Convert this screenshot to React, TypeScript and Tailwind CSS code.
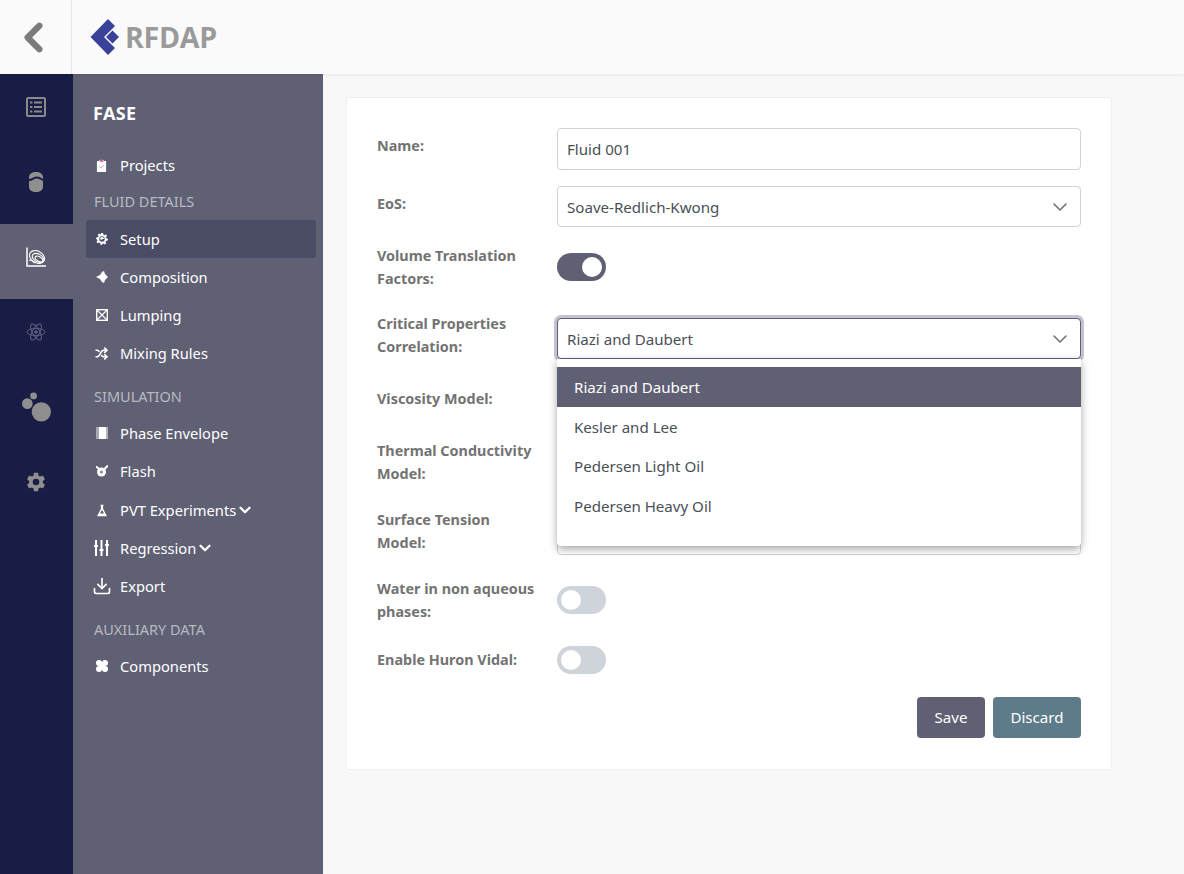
import { ChevronDown, ChevronLeft, Download, Shuffle } from "lucide-react";

const IconList = () => (
  <svg viewBox="0 0 20 20" className="w-5 h-5">
    <rect x="1" y="1" width="18" height="18" rx="1" fill="none" stroke="#8a8a8e" strokeWidth="2" />
    <path d="M4 5.5h2.4M8 5.5h8M4 10h2.4M8 10h8M4 14.5h2.4M8 14.5h8" stroke="#8a8a8e" strokeWidth="2" />
  </svg>
);

const IconTank = () => (
  <svg viewBox="0 0 14 20" className="w-[14px] h-5">
    <path d="M0 7V5C0 2 3 0 7 0s7 2 7 5v2C11 5 9 4.2 7 4.6 5 5 3 7 0 7z" fill="#8f8f8f" />
    <path d="M0 9c3 0 5-2 7-2.5 2-.4 4 .4 7 2.5v6c0 3-3 5-7 5s-7-2-7-5z" fill="#8f8f8f" />
  </svg>
);

const IconEnvelope = () => (
  <svg viewBox="0 0 20 20" className="w-5 h-5" fill="none" stroke="#fff" strokeWidth="1.1">
    <path d="M1 0.5V19H20" strokeWidth="1.5" />
    <ellipse cx="11" cy="10" rx="8" ry="5.8" transform="rotate(30 11 10)" />
    <ellipse cx="12" cy="11" rx="6.2" ry="3.9" transform="rotate(30 12 11)" />
    <ellipse cx="13" cy="12" rx="4.2" ry="2.2" transform="rotate(30 13 12)" />
    <path d="M3 13c2 0 4 1 6 3" />
  </svg>
);

const IconAtom = () => (
  <svg viewBox="0 0 20 20" className="w-5 h-5" fill="none" stroke="#5f6180" strokeWidth="1">
    <ellipse cx="10" cy="10" rx="9" ry="3.6" />
    <ellipse cx="10" cy="10" rx="9" ry="3.6" transform="rotate(60 10 10)" />
    <ellipse cx="10" cy="10" rx="9" ry="3.6" transform="rotate(120 10 10)" />
    <circle cx="10" cy="10" r="1.8" fill="#5f6180" stroke="none" />
  </svg>
);

const IconBubbles = () => (
  <svg viewBox="0 0 30 30" className="w-[29px] h-[30px]" fill="#8f8f8f">
    <circle cx="20" cy="20" r="10" />
    <circle cx="5.5" cy="11.5" r="5.5" />
    <circle cx="12" cy="3.5" r="3.5" />
  </svg>
);

const IconGear = () => (
  <svg viewBox="0 0 24 24" className="w-[22px] h-[22px]" fill="#8f8f8f">
    <path
      fillRule="evenodd"
      d="M19.4 13a7.5 7.5 0 0 0 0-2l2.1-1.6a.5.5 0 0 0 .1-.7l-2-3.4a.5.5 0 0 0-.6-.2l-2.5 1a7.3 7.3 0 0 0-1.7-1l-.4-2.7a.5.5 0 0 0-.5-.4h-3.8a.5.5 0 0 0-.5.4l-.4 2.7a7.3 7.3 0 0 0-1.7 1l-2.5-1a.5.5 0 0 0-.6.2l-2 3.4a.5.5 0 0 0 .1.7L4.6 11a7.5 7.5 0 0 0 0 2l-2.1 1.6a.5.5 0 0 0-.1.7l2 3.4c.1.2.4.3.6.2l2.5-1a7.3 7.3 0 0 0 1.7 1l.4 2.7c0 .2.3.4.5.4h3.8c.2 0 .5-.2.5-.4l.4-2.7a7.3 7.3 0 0 0 1.7-1l2.5 1c.2.1.5 0 .6-.2l2-3.4a.5.5 0 0 0-.1-.7zM12 15.6a3.6 3.6 0 1 1 0-7.2 3.6 3.6 0 0 1 0 7.2z"
    />
  </svg>
);

const SmClipboard = () => (
  <svg viewBox="0 0 12 14" className="w-[11px] h-[13px]">
    <path d="M1 2h2.5V1h5v1H11v12H1z" fill="#fff" />
    <path d="M3.5 8l2 2 3-3.5" stroke="#b9a9b8" fill="none" strokeWidth="1" />
    <rect x="4" y="0.5" width="4" height="2.5" fill="#d9668f" />
  </svg>
);

const SmCog = () => (
  <svg viewBox="0 0 12 12" className="w-3 h-3">
    <path
      fillRule="evenodd"
      fill="#fff"
      d="M5 0h2l.3 1.6 1.3.6L10 1.3 11 3l-1 1.1.3 1.2L12 6l-.4 1.6-1.5.3-.6 1.2.8 1.4-1.6 1-1.1-1-1.2.4L6 12l-1.6-.4-.3-1.5-1.2-.6-1.4.8-1-1.6 1-1.1-.4-1.2L0 6l.4-1.6 1.5-.3.6-1.2L1.7 1.5l1.6-1 1.1 1 .4-.1zM6 3.3a2.7 2.7 0 1 0 0 5.4 2.7 2.7 0 0 0 0-5.4z"
    />
    <path d="M4 6a2 2 0 0 1 4 0H6.5L6 7z" fill="#fff" />
  </svg>
);

const SmPin = () => (
  <svg viewBox="0 0 12 12" className="w-3 h-3" fill="#fff">
    <path d="M0 6l4-2 2-3 2-1 1 3 3 3-3 3-1 3-2-1-2-3z" />
  </svg>
);

const SmBox = () => (
  <svg viewBox="0 0 12 12" className="w-3 h-3" fill="none" stroke="#fff">
    <rect x="0.7" y="0.7" width="10.6" height="10.6" strokeWidth="1.4" />
    <path d="M1 1l10 10M11 1L1 11" strokeWidth="1.2" />
  </svg>
);

const SmPhase = () => (
  <svg viewBox="0 0 12 12" className="w-3 h-3">
    <rect width="12" height="12" fill="#fff" />
    <rect width="3" height="12" fill="#a9a9b4" />
    <rect x="10" width="2" height="12" fill="#b4b4bd" />
  </svg>
);

const SmFlash = () => (
  <svg viewBox="0 0 12 12" className="w-3 h-3">
    <path d="M0 1.5l4.5 3.5M12 0.5L7.5 5" stroke="#fff" strokeWidth="2" />
    <circle cx="5.5" cy="7" r="4.5" fill="#fff" />
    <circle cx="5.5" cy="7" r="1.6" fill="#8c8d9b" />
  </svg>
);

const SmFlask = () => (
  <svg viewBox="0 0 12 14" className="w-[10px] h-[13px]">
    <path d="M4 0h4v1H7.3v4L12 14H0l4.7-9V1H4z" fill="#fff" />
    <path d="M5.9 6L3.6 10.5h4.8z" fill="#5f6073" />
  </svg>
);

const SmSliders = () => (
  <svg viewBox="0 0 15 16" className="w-[15px] h-4" stroke="#fff" strokeWidth="2">
    <path d="M2 0v16M7.5 0v16M13 0v16M0 6h4M5.5 10h4M11 5h4" />
  </svg>
);

const SmPuzzle = () => (
  <svg viewBox="0 0 12 12" className="w-3 h-3" fill="#fff">
    <circle cx="3" cy="3" r="3" />
    <circle cx="9" cy="3" r="3" />
    <circle cx="3" cy="9" r="3" />
    <circle cx="9" cy="9" r="3" />
    <rect x="3" y="3" width="6" height="6" />
  </svg>
);

const rail = [
  { icon: <IconList /> },
  { icon: <IconTank /> },
  { icon: <IconEnvelope />, active: true },
  { icon: <IconAtom /> },
  { icon: <IconBubbles /> },
  { icon: <IconGear /> },
];

const NavItem = ({
  icon,
  label,
  active,
  caret,
}: {
  icon: React.ReactNode;
  label: string;
  active?: boolean;
  caret?: boolean;
}) => (
  <div className={`h-[38px] ml-[13px] mr-[7px] flex items-center rounded-[3px] text-white ${active ? "bg-[#4a4b64]" : ""}`}>
    <div className="w-[31px] mr-[3px] flex justify-center">{icon}</div>
    <span className="text-[14.7px]">{label}</span>
    {caret && <ChevronDown className="w-[18px] h-[18px]" strokeWidth={3} />}
  </div>
);

const NavHeading = ({ children, className }: { children: string; className: string }) => (
  <div className={`px-[21px] text-[14.5px] leading-[20px] text-[#b9b9c2] ${className}`}>{children}</div>
);

const Label = ({ children, className = "" }: { children: React.ReactNode; className?: string }) => (
  <div className={`w-[180px] pr-2 text-[14.4px] leading-[23px] font-bold text-[#737373] ${className}`}>{children}</div>
);

const Toggle = ({ on }: { on?: boolean }) => (
  <div className={`w-[49px] h-7 rounded-full flex items-center px-1 ${on ? "bg-[#5f6073] justify-end" : "bg-[#ced4da]"}`}>
    <div className="w-5 h-5 rounded-full bg-white" />
  </div>
);

const Select = ({ value, focused }: { value?: string; focused?: boolean }) => (
  <div
    className={`h-[41px] bg-white rounded-[4px] border flex items-center justify-between pl-[9px] pr-[12px] text-[15.1px] text-[#495057] ${
      focused ? "border-[#5f6073] shadow-[0_0_0_3px_#c3c3cf]" : "border-[#ced4da]"
    }`}
  >
    <span className="pt-[1px]">{value}</span>
    <svg viewBox="0 0 16 16" className="w-4 h-4" fill="none" stroke="#6c757d" strokeWidth="1.6">
      <path d="M2 5l6 6 6-6" strokeLinecap="round" strokeLinejoin="round" />
    </svg>
  </div>
);

const options = ["Riazi and Daubert", "Kesler and Lee", "Pedersen Light Oil", "Pedersen Heavy Oil"];

export default function App() {
  return (
    <div className="h-[874px] overflow-hidden flex flex-col bg-[#f8f8f8] font-['Noto_Sans',sans-serif]">
      <header className="h-[74px] shrink-0 flex bg-[#fafafa] shadow-[0_1px_4px_rgba(0,0,0,0.08)] relative z-10">
        <div className="w-[72px] flex items-center justify-center border-r border-[#e6e6e6] pr-[4px]">
          <ChevronLeft className="w-[47px] h-[47px] text-[#7b7b7b]" strokeWidth={3.2} />
        </div>
        <div className="pl-[18px] flex items-center gap-[5px]">
          <svg viewBox="90 18 30 37" className="w-[30px] h-[37px]">
            <path d="M108 18L90.5 36 108 54l7-7-11-11 11-11z" fill="#3a4199" />
            <path d="M112.5 29.5L119 36l-6.500 6.500L106 36z" fill="#3a4199" />
          </svg>
          <span className="text-[28.6px] font-bold tracking-[-0.3px] text-[#9a9a9a] font-['Open_Sans',sans-serif]">RFDAP</span>
        </div>
      </header>

      <div className="flex-1 flex min-h-0">
        <nav className="w-[73px] shrink-0 bg-[#191c45]">
          {rail.map((r, i) => (
            <div key={i} className={`h-[75px] pb-[10px] pr-[1px] flex items-center justify-center ${r.active ? "bg-[#5f6073]" : ""}`}>
              {r.icon}
            </div>
          ))}
        </nav>

        <aside className="w-[250px] shrink-0 bg-[#5f6073] pt-[25px]">
          <div className="px-[20px] text-[18px] leading-[28px] font-bold text-white tracking-[0.4px] mb-[19px]">FASE</div>
          <NavItem icon={<SmClipboard />} label="Projects" />
          <NavHeading className="mt-[7px] mb-[9px]">FLUID DETAILS</NavHeading>
          <NavItem icon={<SmCog />} label="Setup" active />
          <NavItem icon={<SmPin />} label="Composition" />
          <NavItem icon={<SmBox />} label="Lumping" />
          <NavItem icon={<Shuffle className="w-[13px] h-[13px]" strokeWidth={3} />} label="Mixing Rules" />
          <NavHeading className="mt-[14px] mb-[8px]">SIMULATION</NavHeading>
          <NavItem icon={<SmPhase />} label="Phase Envelope" />
          <NavItem icon={<SmFlash />} label="Flash" />
          <div className="h-[1px]" />
          <NavItem icon={<SmFlask />} label="PVT Experiments" caret />
          <NavItem icon={<SmSliders />} label="Regression" caret />
          <NavItem icon={<Download className="w-5 h-5" strokeWidth={2} />} label="Export" />
          <NavHeading className="mt-[14px] mb-[8px]">AUXILIARY DATA</NavHeading>
          <NavItem icon={<SmPuzzle />} label="Components" />
        </aside>

        <main className="flex-1 min-w-0 pt-[23px] pl-[23px] pr-[72px]">
          <div className="bg-white rounded-[3px] border border-[#efefef] pt-[30px] pb-[31px] pl-[30px] pr-[30px]">
            <div className="flex h-[58px]">
              <Label className="pt-[6px]">Name:</Label>
              <div className="flex-1">
                <div className="h-[42px] rounded-[4px] border border-[#ced4da] flex items-center pl-[9px] text-[15.1px] text-[#495057]">
                  Fluid 001
                </div>
              </div>
            </div>
            <div className="flex h-[58px]">
              <Label className="pt-[6px]">EoS:</Label>
              <div className="flex-1">
                <Select value="Soave-Redlich-Kwong" />
              </div>
            </div>
            <div className="flex h-[68px]">
              <Label>
                Volume Translation
                <br />
                Factors:
              </Label>
              <div className="flex-1 pt-[9px]">
                <Toggle on />
              </div>
            </div>
            <div className="flex h-[75px] relative z-10">
              <Label>
                Critical Properties
                <br />
                Correlation:
              </Label>
              <div className="flex-1 pt-[6px] relative">
                <Select value="Riazi and Daubert" focused />
                <div className="absolute left-0 right-0 top-[47px] h-[187px] bg-white rounded-b-[4px] shadow-[0_3px_8px_rgba(0,0,0,0.35)] pt-2 text-[15.1px] text-[#495057]">
                  {options.map((o, i) => (
                    <div key={o} className={`h-[39.5px] pt-[2px] flex items-center pl-[17px] ${i === 0 ? "bg-[#5f6073] text-white" : ""}`}>
                      {o}
                    </div>
                  ))}
                </div>
              </div>
            </div>
            <div className="flex h-[52px]">
              <Label>Viscosity Model:</Label>
            </div>
            <div className="flex h-[69px]">
              <Label>
                Thermal Conductivity
                <br />
                Model:
              </Label>
            </div>
            <div className="flex h-[69px]">
              <Label>
                Surface Tension
                <br />
                Model:
              </Label>
              <div className="flex-1 pt-[6px]">
                <Select />
              </div>
            </div>
            <div className="flex h-[69px]">
              <Label>
                Water in non aqueous
                <br />
                phases:
              </Label>
              <div className="flex-1 pt-[9px]">
                <Toggle />
              </div>
            </div>
            <div className="flex h-[51px]">
              <Label className="pt-[2px]">Enable Huron Vidal:</Label>
              <Toggle />
            </div>
            <div className="flex justify-end gap-2 text-[15.1px] text-white">
              <div className="w-[68px] h-[41px] rounded-[4px] bg-[#5f6073] flex items-center justify-center">Save</div>
              <div className="w-[88px] h-[41px] rounded-[4px] bg-[#5d7b89] flex items-center justify-center">Discard</div>
            </div>
          </div>
        </main>
      </div>
    </div>
  );
}
